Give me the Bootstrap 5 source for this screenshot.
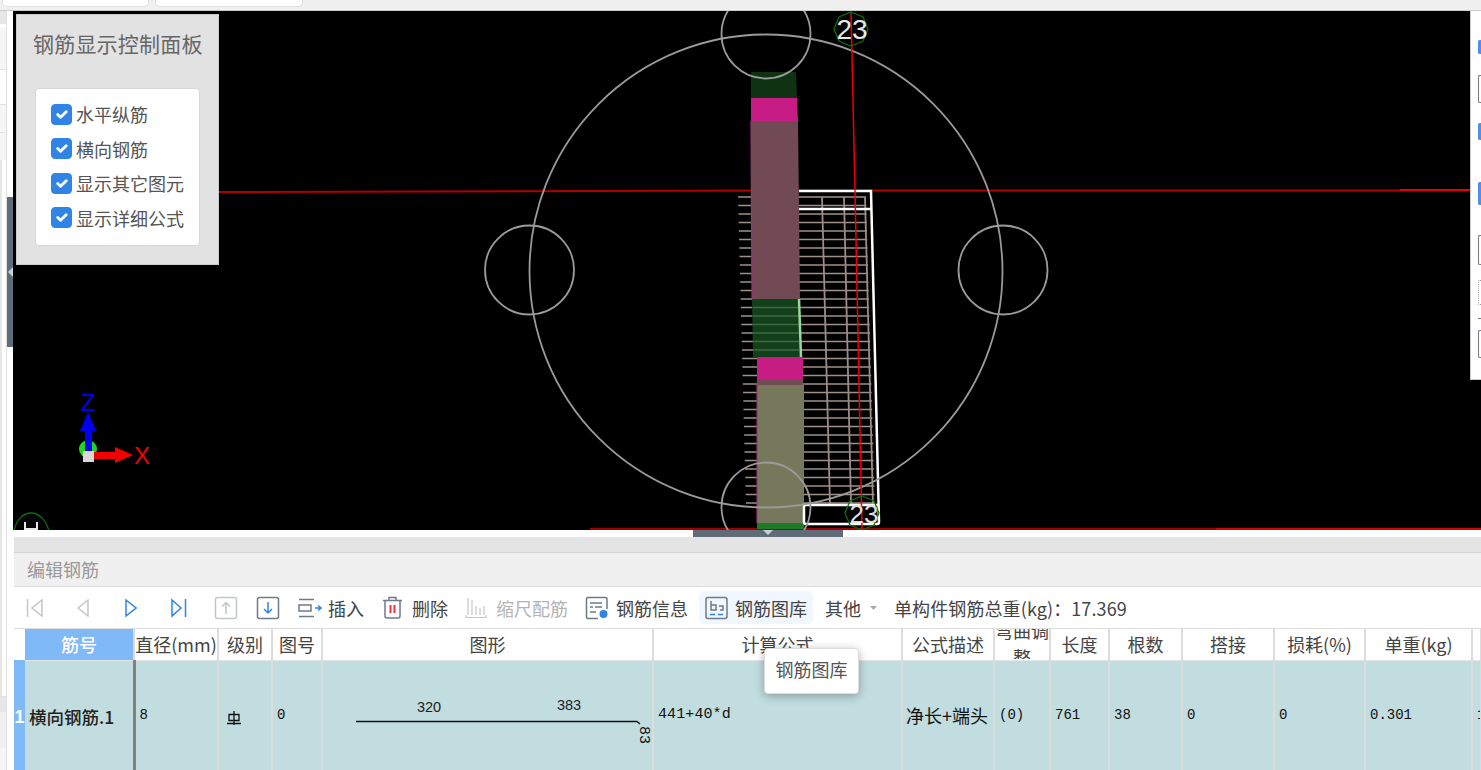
<!DOCTYPE html>
<html lang="zh-CN">
<head>
  <meta charset="UTF-8" />
  <title>编辑钢筋</title>
  <link href="https://cdn.jsdelivr.net/npm/bootstrap@5.3.3/dist/css/bootstrap.min.css" rel="stylesheet" />
  <style>
    html, body { height: 770px; overflow: hidden; }
    body { font-family: "Noto Sans CJK SC", "Liberation Sans", sans-serif; font-size: 18px; color: #444; background: #fff; }
    .top-strip { height: 11px; background: #f0f0f0; border-bottom: 1px solid #ccc; }
    .top-tab { height: 7px; background: #fff; border: 1px solid #e0e0e0; border-top: 0; border-radius: 0 0 5px 5px; }
    .tab-a { width: 147px; margin-left: 2px; }
    .tab-b { width: 148px; margin-left: 6px; }

    .left-strip { width: 13px; height: 759px; background: #fff; }
    .left-list { width: 7px; height: 100%; border-right: 1px solid #e0e0e0; background: #f6f6f6; }
    .ls-tab { height: 16px; background: #e6e6e6; border-bottom: 3px solid #fff; }
    .ls-a { height: 43px; border-bottom: 1px solid #e2e2e2; }
    .ls-b { height: 35px; border-bottom: 1px solid #e2e2e2; background: #fff; }
    .ls-c { height: 28px; border-bottom: 1px solid #e2e2e2; }
    .ls-d { height: 27px; }
    .ls-e { height: 537px; background: #fff; border-left: 2px solid #e6e6e6; border-bottom: 1px solid #e2e2e2; }
    .ls-f { height: 15px; background: #e6e6e6; }
    .ls-g { height: 36px; background: #f0f0f0; }
    .left-handle { width: 6px; height: 150px; margin-top: 186px; background: #5f6b78; display: flex; align-items: center; }
    .handle-arrow { width: 0; height: 0; border: 5px solid transparent; border-right-color: #c9ced3; border-left: 0; margin-left: 1px; }

    .right-col { min-width: 0; }
    .main-area { height: 519px; }
    .view-pane { height: 100%; background: #000; }
    .view-svg { display: block; width: 100%; height: 100%; }
    .ctrl-panel { left: 3px; top: 3px; width: 203px; height: 251px; background: #e2e2e2; border: 1px solid #ccc; padding: 13px 18px; }
    .ctrl-title { font-size: 21px; letter-spacing: .2px; line-height: 30px; color: #666; margin: 0 0 30px -2px; white-space: nowrap; }
    .ctrl-box { background: #fff; border: 1px solid #d8d8d8; border-radius: 4px; height: 158px; padding: 8px 15px; }
    .ctrl-row { height: 34.5px; margin: 0; padding: 0; min-height: 0; display: flex; align-items: center; gap: 4px; }
    .ctrl-row .form-check-input { width: 21px; height: 21px; margin: 0; float: none; border-radius: 4px; background-color: #2f84e6; border-color: #2f84e6; }
    .ctrl-row .form-check-label { color: #555; line-height: 1; white-space: nowrap; }
    .side-panel { right: 0; top: 0; width: 11px; height: 369px; background: #fff; border-left: 1px solid #ccc; border-bottom: 1px solid #ccc; }
    .side-chip { width: 4px; left: 7px; border: 1px solid #778; border-right: 0; border-radius: 2px 0 0 2px; }
    .chip-blue { background: #4a90e8; border-color: #4a90e8; }
    .chip-1 { top: 29px; height: 14px; }
    .chip-2 { top: 64px; height: 28px; }
    .chip-3 { top: 112px; height: 17px; }
    .chip-4 { top: 171px; height: 23px; }
    .chip-5 { top: 224px; height: 30px; }
    .chip-6 { top: 269px; height: 25px; border-style: dotted; border-color: #999; }
    .chip-7 { top: 307px; height: 1px; border-width: 1px 0 0; border-radius: 0; }
    .chip-8 { top: 319px; height: 28px; }

    .bottom-area { height: 240px; }
    .split-bar { height: 7px; background: #fff; padding-left: 680px; }
    .split-grip { width: 150px; height: 100%; background: #5f6b78; }
    .split-arrow { width: 0; height: 0; border: 5px solid transparent; border-top-color: #c9ced3; border-bottom: 0; margin-left: 70px; }
    .edit-panel { margin-left: 1px; }
    .grey-band { height: 16px; background: #e4e4e4; border-bottom: 1px solid #d4d4d4; }
    .title-band { height: 34px; background: #f0f0f0; border-bottom: 1px solid #ddd; padding-left: 13px; color: #999; line-height: 33px; }
    .tool-band { height: 42px; padding: 0 0 0 12px; border-bottom: 1px solid #ddd; white-space: nowrap; }
    .tool-item { display: inline-flex; align-items: center; gap: 7px; height: 33px; color: #444; line-height: 1; flex: none; }
    .tool-off { color: #b4b4b4; }
    .tool-hover { background: #f0f7ff; border-radius: 5px; padding: 0 6px; }
    .tool-svg { flex: none; display: block; }
    .nav-prev { margin-left: 32px; }
    .nav-next { margin-left: 35px; }
    .nav-last { margin-left: 33px; }
    .nav-up { margin-left: 26px; }
    .nav-down { margin-left: 18px; }
    .t-insert { margin-left: 18px; gap: 6px; }
    .t-delete { margin-left: 18px; gap: 9px; }
    .t-scale { margin-left: 17px; gap: 9px; }
    .t-info { margin-left: 17px; }
    .t-lib { margin-left: 11px; }
    .t-other { margin-left: 12px; gap: 9px; }
    .t-total { margin-left: 17px; letter-spacing: .1px; }

    .bar-table { table-layout: fixed; width: 1467px; margin: 0; border-collapse: collapse; }
    .bar-table th, .bar-table td { padding: 0; border: 1px solid #dcdcdc; border-width: 0 2px 0 0; overflow: hidden; vertical-align: middle; }
    .bar-table th { height: 31px; background: #fff; font-weight: 400; text-align: center; color: #444; line-height: 1; white-space: nowrap; border-bottom: 1px solid #e4e4e4; }
    .bar-table td { height: 110px; background: #c1dddf; color: #111; font-family: "Liberation Mono", monospace; font-size: 14px; padding: 0 4px; }
    .bar-table th.head-num { background: #7fb9f7; color: #fff; font-weight: 500; }
    .bar-table th.head-blank { border: 0; }
    .bar-table td.row-num { background: #7fb9f7; color: #fff; font-family: "Liberation Sans", sans-serif; font-weight: 700; font-size: 18px; padding: 4px 0 0; text-align: center; border: 0; }
    .bar-table td.bar-name { font-family: "Noto Sans CJK SC", sans-serif; font-size: 17.5px; color: #222; font-weight: 500; padding: 3px 0 0 4px; border-right: 3px solid #808080; white-space: nowrap; }
    .bar-table td.bar-desc { font-family: "Noto Sans CJK SC", sans-serif; font-size: 18px; padding-left: 3px; white-space: nowrap; }
    .bar-table td.bar-formula { font-size: 15px; letter-spacing: .1px; }
    .bar-table td.bar-grade { padding-left: 8px; }
    .col-a { width: 11px; } .col-b { width: 109px; } .col-c { width: 84px; } .col-d { width: 54px; }
    .col-e { width: 50px; } .col-f { width: 331px; } .col-g { width: 249px; } .col-h { width: 92px; }
    .col-i { width: 56px; } .col-j { width: 59px; } .col-k { width: 73px; } .col-l { width: 92px; }
    .col-m { width: 91px; } .col-n { width: 107px; } .col-o { width: 9px; }
    .bar-table th.wrap-head { white-space: normal; line-height: 27px; }
    .wrap-clip { height: 30px; overflow: hidden; display: flex; flex-direction: column; justify-content: center; }
    .tip-box { left: 764px; top: 648px; width: 95px; height: 46px; background: #fff; border: 1px solid #ddd; border-radius: 4px; box-shadow: 0 2px 10px rgba(0,0,0,.3); line-height: 40px; text-align: center; color: #555; z-index: 5; }
    .shape-svg { display: block; }
    .grade-svg { margin-top: 4px; }
  </style>
</head>
<body class="position-relative">
  <div class="top-strip d-flex">
    <div class="top-tab tab-a"></div>
    <div class="top-tab tab-b"></div>
  </div>

  <div class="d-flex">
    <div class="left-strip flex-shrink-0 d-flex">
      <div class="left-list flex-shrink-0">
        <div class="ls-tab"></div>
        <div class="ls-a"></div>
        <div class="ls-b"></div>
        <div class="ls-c"></div>
        <div class="ls-d"></div>
        <div class="ls-e"></div>
        <div class="ls-f"></div>
        <div class="ls-g"></div>
      </div>
      <div class="left-handle"><div class="handle-arrow"></div></div>
    </div>

    <div class="right-col flex-grow-1">
      <div class="main-area">
        <div class="view-pane position-relative">
          <svg class="view-svg" viewBox="13 11 1468 519" fill="none" font-family="Liberation Sans, sans-serif">
            <!-- red axes -->
            <path d="M219 192L800 190.500H1400" stroke="#b00000" stroke-width="2"/>
            <path d="M1400 190H1470" stroke="#e80000" stroke-width="2"/>
            <path d="M590 529H1216" stroke="#a00000" stroke-width="2"/>
            <path d="M1216 529H1481" stroke="#d80000" stroke-width="2"/>
            <!-- stirrup bars, filled in below -->
            <g id="stubs" stroke="#a09088" stroke-width="1.600"></g>
            <!-- wall column -->
            <path d="M751 72H796L797 98H751Z" fill="#0f3312"/>
            <path d="M751 98H797L798 121H751Z" fill="#c81c85"/>
            <path d="M751 121H798L800 299H752Z" fill="#714a53"/>
            <path d="M752 299H799L801 357H753Z" fill="#11401a"/>
            <path d="M757 357H803V380H757Z" fill="#c81c85"/>
            <path d="M757 380H803V385H757Z" fill="#714a53"/>
            <path d="M757 385H804V523H757Z" fill="#75785a"/>
            <path d="M757 523H804V529H757Z" fill="#1f7a28"/>
            <g id="greenBars" stroke="#3f6a42" stroke-width="1.300"></g>
            <path d="M751 121L752 299M757 385V523" stroke="#a0307a" stroke-width="1.200"/>
            <path d="M799 299L801 357" stroke="#9ad79a" stroke-width="2.500"/>
            <!-- vertical bars of the mesh -->
            <path d="M822 197L830 505M844 197L851 505M865 197L873 505" stroke="#9b8c88" stroke-width="1.800"/>
            <!-- white outline -->
            <path d="M799 191H871L879 522Q879 524 877 524H806Q804 524 804 522V505H878M799 209H871" stroke="#fff" stroke-width="2.500"/>
            <!-- circles -->
            <g stroke="#9a9a9a" stroke-width="1.800">
              <circle cx="766" cy="271" r="236.500"/>
              <circle cx="529.500" cy="270" r="44.500"/>
              <circle cx="1003" cy="270" r="44.500"/>
              <circle cx="766" cy="34" r="44.500"/>
              <circle cx="766" cy="507" r="44.500"/>
            </g>
            <path d="M851 12L855 190L862 530" stroke="#f00000" stroke-width="1.500"/>
            <!-- axis markers -->
            <path d="M851 12L863 17L868 29L863 41L851 46L839 41L834 29L839 17Z" stroke="#0a6e0a" stroke-width="1.300"/>
            <text x="852" y="39" text-anchor="middle" font-size="28" fill="#e8e8e8">23</text>
            <path d="M862 496L874 501L879 513L874 525L862 530L850 525L845 513L850 501Z" stroke="#0a6e0a" stroke-width="1.300"/>
            <text x="864" y="523" text-anchor="middle" font-size="26" fill="#e0e0e0">23</text>
            <path d="M14 531C16 520 23 513 31 513C39 513 46 520 49 531" stroke="#0a6e0a" stroke-width="1.300"/>
            <path d="M25 531V522M37 531V522M25 529H37" stroke="#e8e8e8" stroke-width="2"/>
            <!-- axis gizmo -->
            <circle cx="88" cy="449" r="9" fill="#22d422"/>
            <path d="M85 451V431H80L88 412L96 431H92V451Z" fill="#0000ee"/>
            <path d="M94 452H115V447L133 455L115 463V459H94Z" fill="#f00000"/>
            <rect x="83" y="451" width="11" height="11" fill="#d8d8d8"/>
            <text x="88" y="411" text-anchor="middle" font-size="24" fill="#0000ee">Z</text>
            <text x="142" y="464" text-anchor="middle" font-size="24" fill="#f00000">X</text>
          </svg>

          <div class="ctrl-panel position-absolute">
            <div class="ctrl-title">钢筋显示控制面板</div>
            <div class="ctrl-box">
              <div class="form-check ctrl-row"><input class="form-check-input" type="checkbox" id="c1" checked /><label class="form-check-label" for="c1">水平纵筋</label></div>
              <div class="form-check ctrl-row"><input class="form-check-input" type="checkbox" id="c2" checked /><label class="form-check-label" for="c2">横向钢筋</label></div>
              <div class="form-check ctrl-row"><input class="form-check-input" type="checkbox" id="c3" checked /><label class="form-check-label" for="c3">显示其它图元</label></div>
              <div class="form-check ctrl-row"><input class="form-check-input" type="checkbox" id="c4" checked /><label class="form-check-label" for="c4">显示详细公式</label></div>
            </div>
          </div>

          <div class="side-panel position-absolute">
            <div class="side-chip chip-blue chip-1 position-absolute"></div>
            <div class="side-chip chip-2 position-absolute"></div>
            <div class="side-chip chip-blue chip-3 position-absolute"></div>
            <div class="side-chip chip-blue chip-4 position-absolute"></div>
            <div class="side-chip chip-5 position-absolute"></div>
            <div class="side-chip chip-6 position-absolute"></div>
            <div class="side-chip chip-7 position-absolute"></div>
            <div class="side-chip chip-8 position-absolute"></div>
          </div>
        </div>
      </div>

      <div class="bottom-area">
        <div class="split-bar"><div class="split-grip"><div class="split-arrow"></div></div></div>
        <div class="edit-panel">
          <div class="grey-band"></div>
          <div class="title-band">编辑钢筋</div>
          <div class="tool-band d-flex align-items-center">
            <svg class="tool-svg" width="18" height="20" fill="none" stroke="#c2c6ca" stroke-width="1.500"><path d="M1.500 1V19M16 2L6 10L16 18Z"/></svg>
            <svg class="tool-svg nav-prev" width="13" height="20" fill="none" stroke="#c2c6ca" stroke-width="1.500"><path d="M12 2L2 10L12 18Z"/></svg>
            <svg class="tool-svg nav-next" width="13" height="20" fill="none" stroke="#2f84e6" stroke-width="1.500"><path d="M2 2L12 10L2 18Z"/></svg>
            <svg class="tool-svg nav-last" width="18" height="20" fill="none" stroke="#2f84e6" stroke-width="1.500"><path d="M2 2L11 10L2 18ZM15.500 1V19"/></svg>
            <svg class="tool-svg nav-up" width="24" height="24" fill="none" stroke="#c2c6ca" stroke-width="1.500"><rect x="1.500" y="1.500" width="21" height="21" rx="2"/><path d="M12 18V7M8 10.500L12 6.500L16 10.500"/></svg>
            <svg class="tool-svg nav-down" width="24" height="24" fill="none" stroke="#6f7a88" stroke-width="1.500"><rect x="1.500" y="1.500" width="21" height="21" rx="2"/><path d="M12 6V17M8 13L12 17L16 13" stroke="#2f84e6"/></svg>
            <div class="tool-item t-insert">
              <svg class="tool-svg" width="24" height="20" fill="none" stroke="#6f7a88" stroke-width="1.500"><path d="M1 1.500H16M1 18.500H16M1 7H13V13H1Z"/><path d="M17 10H22M20 7.500L23 10L20 12.500" stroke="#2f84e6"/></svg>
              <span>插入</span>
            </div>
            <div class="tool-item t-delete">
              <svg class="tool-svg" width="21" height="23" fill="none" stroke="#6f7a88" stroke-width="1.500"><path d="M1 4.500H20M7 4V1.500H14V4M3 5V20C3 21 4 22 5 22H16C17 22 18 21 18 20V5"/><path d="M8.500 9V17M12.500 9V17" stroke="#e8363c" stroke-width="2"/></svg>
              <span>删除</span>
            </div>
            <div class="tool-item tool-off t-scale">
              <svg class="tool-svg" width="22" height="22" fill="none" stroke="#c8c8c8" stroke-width="1.200"><path d="M3 1V18M7 3V18M11 9V18M15 11V18M19 9V18M1 20.500H21M1 18V21M21 18V21"/></svg>
              <span>缩尺配筋</span>
            </div>
            <div class="tool-item t-info">
              <svg class="tool-svg" width="24" height="24" fill="none" stroke="#6f7a88" stroke-width="1.500"><path d="M22 13V3C22 2 21.500 1.500 20.500 1.500H3C2 1.500 1.500 2 1.500 3V21C1.500 22 2 22.500 3 22.500H13"/><path d="M5 7H17M5 11H8M10 11H17M5 16H11"/><circle cx="18.500" cy="18" r="4" fill="#2f84e6" stroke="none"/></svg>
              <span>钢筋信息</span>
            </div>
            <div class="tool-item tool-hover t-lib">
              <svg class="tool-svg" width="23" height="24" fill="none" stroke="#6f7a88" stroke-width="1.500"><rect x="1" y="1.500" width="21" height="21" rx="2"/><path d="M6 5V14H11V9H6M14 10H18V14H15"/><path d="M5 18.500H10M13 18.500H18" stroke="#2f84e6"/></svg>
              <span>钢筋图库</span>
            </div>
            <div class="tool-item t-other">
              <span>其他</span>
              <svg class="tool-svg" width="7" height="4" fill="#aaa"><path d="M0 0H7L3.500 4Z"/></svg>
            </div>
            <div class="tool-item t-total">单构件钢筋总重(kg)：17.369</div>
          </div>
          <table class="table bar-table">
            <colgroup>
              <col class="col-a" /><col class="col-b" /><col class="col-c" /><col class="col-d" /><col class="col-e" /><col class="col-f" /><col class="col-g" /><col class="col-h" /><col class="col-i" /><col class="col-j" /><col class="col-k" /><col class="col-l" /><col class="col-m" /><col class="col-n" /><col class="col-o" />
            </colgroup>
            <thead>
              <tr>
                <th class="head-blank"></th>
                <th class="head-num">筋号</th>
                <th>直径(mm)</th>
                <th>级别</th>
                <th>图号</th>
                <th>图形</th>
                <th>计算公式</th>
                <th>公式描述</th>
                <th class="wrap-head"><div class="wrap-clip">弯曲调整</div></th>
                <th>长度</th>
                <th>根数</th>
                <th>搭接</th>
                <th>损耗(%)</th>
                <th>单重(kg)</th>
                <th></th>
              </tr>
            </thead>
            <tbody>
              <tr>
                <td class="row-num">1</td>
                <td class="bar-name">横向钢筋.1</td>
                <td>8</td>
                <td class="bar-grade">
                  <svg class="d-block grade-svg" width="14" height="14" fill="none" stroke="#111" stroke-width="1.300"><path d="M7 0V14M2 3.500H12V9.500H2ZM0 12.500H14"/></svg>
                </td>
                <td>0</td>
                <td class="p-0">
                  <svg class="shape-svg" width="329" height="110" fill="none" stroke="#111">
                    <path d="M33 60.500H314L317 63" stroke-width="1.500"/>
                    <text x="106" y="51" text-anchor="middle" font-family="Liberation Sans, sans-serif" font-size="14.500" fill="#222" stroke="none">320</text>
                    <text x="246" y="49" text-anchor="middle" font-family="Liberation Sans, sans-serif" font-size="14.500" fill="#222" stroke="none">383</text>
                    <text transform="translate(317 65) rotate(90)" font-family="Liberation Mono, monospace" font-size="15" fill="#111" stroke="none">83</text>
                  </svg>
                </td>
                <td class="bar-formula">441+40*d</td>
                <td class="bar-desc">净长+端头</td>
                <td>(0)</td>
                <td>761</td>
                <td>38</td>
                <td>0</td>
                <td>0</td>
                <td>0.301</td>
                <td>1</td>
              </tr>
            </tbody>
          </table>
        </div>
      </div>
    </div>
  </div>

  <div class="tip-box position-absolute">钢筋图库</div>

  <script src="https://cdn.jsdelivr.net/npm/bootstrap@5.3.3/dist/js/bootstrap.bundle.min.js"></script>
  <script>
    // stirrup bars repeat every 8.5px down the wall
    var d = '', g = '';
    for (var i = 0; i < 37; i++) {
      var y = 197 + i * 8.5;
      var t = (y - 197) / 310;
      d += 'M' + (738 + t * 8) + ' ' + y + 'H' + (866 + t * 9);
      if (y > 299 && y < 357) g += 'M753 ' + y + 'H799';
    }
    document.getElementById('stubs').innerHTML = '<path d="' + d + '"/>';
    document.getElementById('greenBars').innerHTML = '<path d="' + g + '"/>';
  </script>
</body>
</html>
